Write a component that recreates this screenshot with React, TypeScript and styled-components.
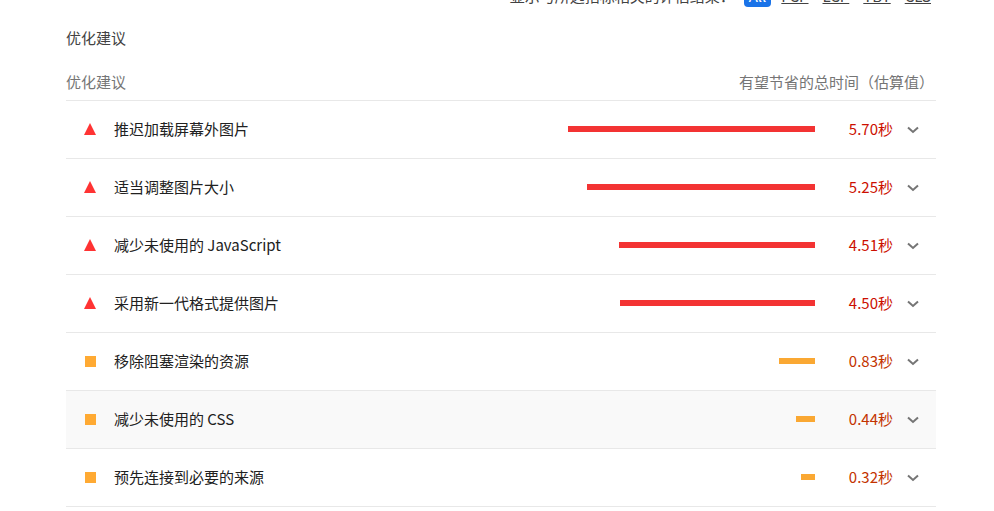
import styled, { createGlobalStyle } from "styled-components";

const GlobalStyle = createGlobalStyle`
  body {
    margin: 0;
    background: #ffffff;
    font-family: "Noto Sans CJK SC", "Noto Sans", sans-serif;
    color: #212121;
  }
`;

const audits = [
  { title: "推迟加载屏幕外图片", seconds: 5.7, level: "fail" },
  { title: "适当调整图片大小", seconds: 5.25, level: "fail" },
  { title: "减少未使用的 JavaScript", seconds: 4.51, level: "fail" },
  { title: "采用新一代格式提供图片", seconds: 4.5, level: "fail" },
  { title: "移除阻塞渲染的资源", seconds: 0.83, level: "average" },
  { title: "减少未使用的 CSS", seconds: 0.44, level: "average", hover: true },
  { title: "预先连接到必要的来源", seconds: 0.32, level: "average" },
];

const metrics = ["FCP", "LCP", "TBT", "CLS"];

export default function App() {
  return (
    <>
      <GlobalStyle />
      <Page>
        <FilterBar>
          <FilterLabel>显示与所选指标相关的评估结果：</FilterLabel>
          <FilterButton>All</FilterButton>
          {metrics.map((m) => (
            <FilterLink key={m}>{m}</FilterLink>
          ))}
        </FilterBar>

        <Title>优化建议</Title>

        <Header>
          <span>优化建议</span>
          <span>有望节省的总时间（估算值）</span>
        </Header>

        {audits.map((a) => (
          <Row key={a.title} $hover={a.hover}>
            {a.level === "fail" ? <Triangle /> : <Square />}
            <AuditTitle>{a.title}</AuditTitle>
            <BarTrack>
              <Bar $level={a.level} style={{ width: Math.round(a.seconds * 43.35) }} />
            </BarTrack>
            <Value $level={a.level}>{a.seconds.toFixed(2)}秒</Value>
            <Chevron width="12" height="8" viewBox="0 0 12 8">
              <polyline points="1,1.5 6,6 11,1.5" fill="none" stroke="#757575" strokeWidth="2" />
            </Chevron>
          </Row>
        ))}
      </Page>
    </>
  );
}

const Page = styled.div`
  width: 870px;
  margin-left: 66px;
`;

const FilterBar = styled.div`
  display: flex;
  justify-content: flex-end;
  align-items: center;
  height: 22px;
  margin-top: -15px;
  padding-right: 5px;
  font-size: 15px;
  line-height: 20px;
  color: #424242;
`;

const FilterLabel = styled.span`
  margin-right: 9px;
`;

const FilterButton = styled.span`
  background: #1a73e8;
  color: #ffffff;
  border-radius: 4px;
  padding: 1px 5px;
  margin-right: 10px;
`;

const FilterLink = styled.span`
  text-decoration: underline;
  & + & {
    margin-left: 14px;
  }
`;

const Title = styled.div`
  margin-top: 20px;
  font-size: 15px;
  line-height: 22px;
  color: #424242;
`;

const Header = styled.div`
  display: flex;
  justify-content: space-between;
  padding: 22px 2px 7px 0;
  border-bottom: 1px solid #e8e8e8;
  font-size: 15px;
  line-height: 22px;
  color: #757575;
`;

const Row = styled.div<{ $hover?: boolean }>`
  box-sizing: border-box;
  display: grid;
  grid-template-columns: 12px 1fr 250px 78px 26px;
  align-items: center;
  height: 58px;
  padding: 0 17px 2px 18px;
  border-bottom: 1px solid #e8e8e8;
  background: ${(p) => (p.$hover ? "#f9f9f9" : "#ffffff")};
  font-size: 15px;
`;

const Triangle = styled.div`
  width: 12px;
  height: 12px;
  margin-top: 1px;
  background: #ff3333;
  clip-path: polygon(50% 0, 100% 100%, 0 100%);
`;

const Square = styled.div`
  width: 11px;
  height: 11px;
  margin: 1px 0 0 1px;
  background: #ffaa33;
`;

const AuditTitle = styled.div`
  padding-left: 18px;
  color: #212121;
`;

const BarTrack = styled.div`
  display: flex;
  justify-content: flex-end;
`;

const Bar = styled.div<{ $level: string }>`
  height: 6px;
  background: ${(p) => (p.$level === "fail" ? "#f33333" : "#faa833")};
`;

const Value = styled.div<{ $level: string }>`
  text-align: right;
  color: ${(p) => (p.$level === "fail" ? "#cc0f00" : "#c33300")};
`;

const Chevron = styled.svg`
  justify-self: end;
  margin-top: 2px;
  display: block;
`;
